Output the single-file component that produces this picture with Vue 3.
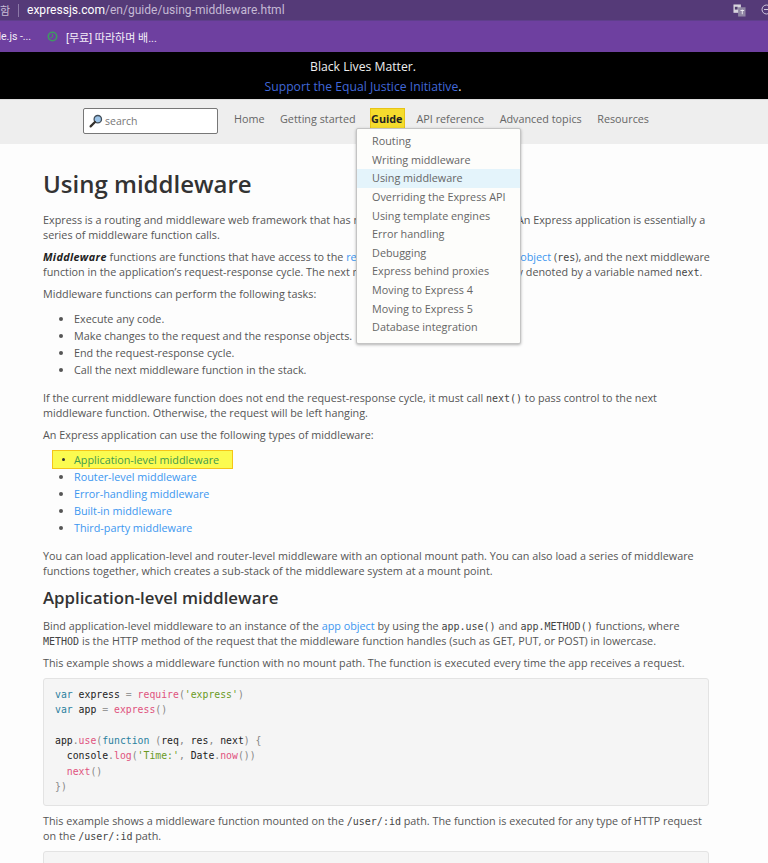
<script setup>
const navItems = ['Home', 'Getting started', 'Guide', 'API reference', 'Advanced topics', 'Resources']
const menu = ['Routing', 'Writing middleware', 'Using middleware', 'Overriding the Express API', 'Using template engines', 'Error handling', 'Debugging', 'Express behind proxies', 'Moving to Express 4', 'Moving to Express 5', 'Database integration']
const tasks = ['Execute any code.', 'Make changes to the request and the response objects.', 'End the request-response cycle.', 'Call the next middleware function in the stack.']
const types = ['Application-level middleware', 'Router-level middleware', 'Error-handling middleware', 'Built-in middleware', 'Third-party middleware']
</script>

<template>
  <div class="page">
    <div class="urlbar">
      <span class="secure">함</span>
      <span class="divider"></span>
      <span class="url"><b>expressjs.com</b>/en/guide/using-middleware.html</span>
      <svg class="translate" width="13" height="13" viewBox="0 0 14 14">
        <rect x="0.5" y="0.5" width="8" height="9" fill="#d8d4de" />
        <rect x="5.5" y="3.5" width="8" height="10" fill="#8f85a3" />
        <rect x="2" y="3" width="3" height="3" fill="#4d3a6d" />
        <path d="M8 7h4M10 6v5" stroke="#efeef2" fill="none" />
      </svg>
      <svg class="zoomicon" width="10" height="12" viewBox="0 0 10 12">
        <circle cx="5.5" cy="5.5" r="4.5" fill="none" stroke="#cfc7dc" />
        <path d="M3 5.5h5" stroke="#cfc7dc" />
      </svg>
    </div>
    <div class="bookmarks">
      <span class="bm first">le.js -...</span>
      <svg class="clock" width="11" height="11" viewBox="0 0 11 11">
        <circle cx="5.5" cy="5.5" r="4.2" fill="none" stroke="#3f9a62" stroke-width="1.6" />
        <path d="M5.5 3v3l-2 1" fill="none" stroke="#3f9a62" />
      </svg>
      <span class="bm">[무료] 따라하며 배...</span>
    </div>
    <div class="banner">
      <div class="bline">Black Lives Matter.</div>
      <div class="bline"><a class="blink">Support the Equal Justice Initiative</a>.</div>
    </div>
    <nav class="nav">
      <div class="search">
        <svg width="14" height="14" viewBox="0 0 14 14">
          <circle cx="8.8" cy="5.2" r="3.7" fill="#9cc4e8" stroke="#44505c" stroke-width="1.3" />
          <path d="M6 8 1.6 12.4" stroke="#33302c" stroke-width="2.2" stroke-linecap="round" />
        </svg>
        <span>search</span>
      </div>
      <ul class="navlist">
        <li v-for="item in navItems" :key="item" :class="{ guide: item === 'Guide' }">
          {{ item }}
          <div v-if="item === 'Guide'" class="dropdown">
            <div v-for="m in menu" :key="m" class="mitem" :class="{ active: m === 'Using middleware' }">{{ m }}</div>
          </div>
        </li>
      </ul>
    </nav>
    <main class="content">
      <h1>Using middleware</h1>
      <p>Express is a routing and middleware web framework that has minimal functionality of its own: An Express application is essentially a<br>series of middleware function calls.</p>
      <p><strong><em>Middleware</em></strong> functions are functions that have access to the <a>request object</a> (<code>req</code>), the <a>response object</a> (<code>res</code>), and the next middleware<br>function in the application’s request-response cycle. The next middleware function is commonly denoted by a variable named <code>next</code>.</p>
      <p>Middleware functions can perform the following tasks:</p>
      <ul class="list tasks">
        <li v-for="t in tasks" :key="t">{{ t }}</li>
      </ul>
      <p>If the current middleware function does not end the request-response cycle, it must call <code>next()</code> to pass control to the next<br>middleware function. Otherwise, the request will be left hanging.</p>
      <p>An Express application can use the following types of middleware:</p>
      <ul class="list types">
        <li v-for="(t, i) in types" :key="t" :class="{ mark: i === 0 }"><a>{{ t }}</a></li>
      </ul>
      <p>You can load application-level and router-level middleware with an optional mount path. You can also load a series of middleware<br>functions together, which creates a sub-stack of the middleware system at a mount point.</p>
      <h2>Application-level middleware</h2>
      <p>Bind application-level middleware to an instance of the <a>app object</a> by using the <code>app.use()</code> and <code>app.METHOD()</code> functions, where<br><code>METHOD</code> is the HTTP method of the request that the middleware function handles (such as GET, PUT, or POST) in lowercase.</p>
      <p>This example shows a middleware function with no mount path. The function is executed every time the app receives a request.</p>
      <pre class="codebox"><span class="kw">var</span> express <span class="op">=</span> <span class="fn">require</span><span class="pn">(</span><span class="st">'express'</span><span class="pn">)</span>
<span class="kw">var</span> app <span class="op">=</span> <span class="fn">express</span><span class="pn">()</span>

app<span class="pn">.</span><span class="fn">use</span><span class="pn">(</span><span class="kw">function</span> <span class="pn">(</span>req<span class="pn">,</span> res<span class="pn">,</span> next<span class="pn">) {</span>
  console<span class="pn">.</span><span class="fn">log</span><span class="pn">(</span><span class="st">'Time:'</span><span class="pn">,</span> Date<span class="pn">.</span><span class="fn">now</span><span class="pn">())</span>
  <span class="fn">next</span><span class="pn">()</span>
<span class="pn">})</span></pre>
      <p>This example shows a middleware function mounted on the <code>/user/:id</code> path. The function is executed for any type of HTTP request<br>on the <code>/user/:id</code> path.</p>
      <div class="codebox next"></div>
    </main>
  </div>
</template>

<style>
html, body { margin: 0; padding: 0; background: #fdfdfd; }
</style>

<style scoped>
.page { width: 768px; height: 863px; overflow: hidden; font-family: "Open Sans", sans-serif; background: #fdfdfd; color: #555; }
.urlbar { height: 20px; background: #553a78; display: flex; align-items: center; font-family: "Roboto", "Noto Sans CJK KR", sans-serif; font-size: 12.05px; color: #c4b9d4; }
.secure { width: 10px; overflow: hidden; font-size: 11px; color: #c7bdd6; white-space: nowrap; flex: none; }
.divider { width: 1px; height: 13px; background: #8c79a8; margin-left: 8px; flex: none; }
.url { margin-left: 8px; }
.url b { font-weight: 400; color: #fff; }
.translate { margin-left: auto; margin-right: 15px; }
.zoomicon { margin-right: -3px; }
.bookmarks { height: 32px; background: #6e40a0; border-top: 1px solid #5f3f8c; box-sizing: border-box; display: flex; align-items: center; font-family: "Roboto", "Noto Sans CJK KR", sans-serif; font-size: 11px; color: #f3eef8; }
.bm.first { margin-left: -1.5px; width: 41.5px; white-space: nowrap; flex: none; font-size: 10.5px; }
.clock { margin-left: 7px; margin-right: 8px; }
.banner { height: 47px; background: #000; box-sizing: border-box; padding: 5px 42px 0 0; text-align: center; color: #eee; font-size: 12.2px; line-height: 20px; }
.blink { color: #4168d8; }
.nav { height: 45px; background: #eeeeee; box-sizing: border-box; border-top: 1px solid #ddd; display: flex; padding-left: 83px; padding-top: 8px; }
.search { width: 135px; height: 26px; box-sizing: border-box; background: #fff; border: 1px solid #777; border-radius: 2px; display: flex; align-items: center; gap: 2px; padding-left: 5px; font-size: 10.5px; color: #777; }
.navlist { list-style: none; display: flex; gap: 15.5px; margin: 1px 0 0 16px; padding: 0; font-size: 10.8px; color: #666; line-height: 20px; }
.navlist li { position: relative; height: 20px; }
.guide { background: #f5dc2d; color: #222; font-weight: 700; outline: 1px solid #e8c417; padding-right: 2px; margin-right: -3.5px; }
.dropdown { position: absolute; top: 19px; left: -15px; width: 165px; height: 216px; box-sizing: border-box; background: #fdfdfb; border: 1px solid #c4c4c4; border-radius: 2px; box-shadow: 0 1px 3px rgba(0,0,0,.3); padding-top: 3px; font-weight: 400; color: #666; z-index: 5; }
.mitem { height: 18.65px; line-height: 18.65px; padding-left: 15px; font-size: 10.8px; white-space: nowrap; }
.mitem.active { background: #e4f4fb; }
.content { padding: 0 59px 0 43px; font-size: 10.8px; line-height: 15px; position: relative; }
h1 { margin: 25px 0 0; font-size: 24px; line-height: 30px; font-weight: 600; color: #333; }
h2 { margin: 8.5px 0 0; font-size: 16.8px; line-height: 24px; font-weight: 600; color: #333; }
p { margin: 7px 0 0; white-space: nowrap; }
h1 + p { margin-top: 12.5px; }
h2 + p { margin-top: 7.5px; }
strong { color: #222; letter-spacing: .35px; }
a { color: #3c97f0; }
code { font-family: "DejaVu Sans Mono", monospace; font-size: 10px; line-height: 0; color: #444; }
.list { margin: 9px 0 0; padding: 0 0 0 31px; line-height: 17px; }
.list + p { margin-top: 12px; }
.mark { position: relative; background: #fbfb50; outline: 1.5px solid #f5c518; margin-left: -21px; padding-left: 21px; width: 158px; list-style: none; }
.mark::before { content: ""; position: absolute; left: 9px; top: 7px; width: 3px; height: 3px; border-radius: 50%; background: #333; }
.mark a { color: #3f9a4e; }
.codebox { margin: 8.5px 0 0; background: #f5f5f5; border: 1px solid #e3e3e3; border-radius: 3px; padding: 7.5px 11px; font-family: "DejaVu Sans Mono", monospace; font-size: 9.8px; line-height: 15.4px; height: 128px; box-sizing: border-box; color: #222; }
.codebox + p { margin-top: 7px; }
.codebox.next { margin-top: 7.5px; height: 40px; }
.kw { color: #2a7f9e; }
.op { color: #999; }
.fn { color: #e0527d; }
.st { color: #6a9a1f; }
.pn { color: #888; }
</style>
